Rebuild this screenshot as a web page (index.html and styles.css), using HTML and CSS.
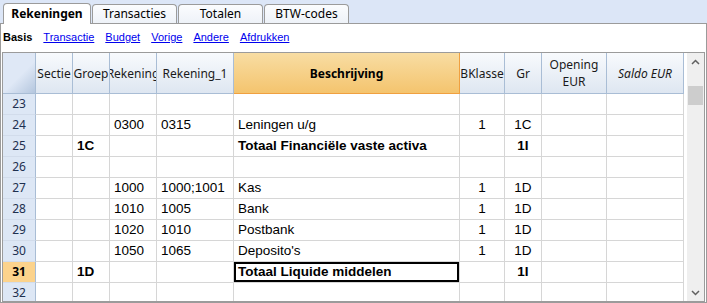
FILE: index.html
```html
<!DOCTYPE html>
<html lang="nl">
<head>
    <meta charset="UTF-8">
    <title>Rekeningen</title>
    <link rel="stylesheet" href="styles.css">
</head>
<body>
    <div class="tabs">
        <div class="tab active">Rekeningen</div>
        <div class="tab">Transacties</div>
        <div class="tab">Totalen</div>
        <div class="tab">BTW-codes</div>
    </div>
    <div class="pane">
        <div class="views">
            <span class="view current">Basis</span>
            <a class="view" href="#">Transactie</a>
            <a class="view" href="#">Budget</a>
            <a class="view" href="#">Vorige</a>
            <a class="view" href="#">Andere</a>
            <a class="view" href="#">Afdrukken</a>
        </div>
        <div class="grid">
            <table class="sheet">
                <thead>
                    <tr>
                        <th class="corner w-rh"></th>
                        <th class="w-sec"><div class="hd">Sectie</div></th>
                        <th class="w-grp"><div class="hd">Groep</div></th>
                        <th class="w-rek"><div class="hd">Rekening</div></th>
                        <th class="w-rek1"><div class="hd">Rekening_1</div></th>
                        <th class="w-desc sel"><div class="hd bold">Beschrijving</div></th>
                        <th class="w-bk"><div class="hd">BKlasse</div></th>
                        <th class="w-gr"><div class="hd">Gr</div></th>
                        <th class="w-open"><div class="hd two">Opening<br>EUR</div></th>
                        <th class="w-saldo"><div class="hd italic">Saldo EUR</div></th>
                    </tr>
                </thead>
                <tbody>
                    <tr><td class="rh">23</td><td></td><td></td><td></td><td></td><td></td><td></td><td></td><td></td><td></td></tr>
                    <tr><td class="rh">24</td><td></td><td></td><td>0300</td><td>0315</td><td>Leningen u/g</td><td class="c">1</td><td class="c">1C</td><td></td><td></td></tr>
                    <tr><td class="rh">25</td><td></td><td class="b">1C</td><td></td><td></td><td class="b">Totaal Financiële vaste activa</td><td></td><td class="c b">1I</td><td></td><td></td></tr>
                    <tr><td class="rh">26</td><td></td><td></td><td></td><td></td><td></td><td></td><td></td><td></td><td></td></tr>
                    <tr><td class="rh">27</td><td></td><td></td><td>1000</td><td>1000;1001</td><td>Kas</td><td class="c">1</td><td class="c">1D</td><td></td><td></td></tr>
                    <tr><td class="rh">28</td><td></td><td></td><td>1010</td><td>1005</td><td>Bank</td><td class="c">1</td><td class="c">1D</td><td></td><td></td></tr>
                    <tr><td class="rh">29</td><td></td><td></td><td>1020</td><td>1010</td><td>Postbank</td><td class="c">1</td><td class="c">1D</td><td></td><td></td></tr>
                    <tr><td class="rh">30</td><td></td><td></td><td>1050</td><td>1065</td><td>Deposito's</td><td class="c">1</td><td class="c">1D</td><td></td><td></td></tr>
                    <tr class="cur"><td class="rh">31</td><td></td><td class="b">1D</td><td></td><td></td><td class="b focus">Totaal Liquide middelen</td><td></td><td class="c b">1I</td><td></td><td></td></tr>
                    <tr><td class="rh">32</td><td></td><td></td><td></td><td></td><td></td><td></td><td></td><td></td><td></td></tr>
                </tbody>
            </table>
            <div class="scrollbar">
                <svg class="arrow" width="9" height="6" viewBox="0 0 9 6"><path d="M1 5 L4.5 1.5 L8 5" fill="none" stroke="#606060" stroke-width="1.5"/></svg>
                <div class="track"><div class="thumb"></div></div>
                <svg class="arrow" width="9" height="6" viewBox="0 0 9 6"><path d="M1 1 L4.5 4.5 L8 1" fill="none" stroke="#606060" stroke-width="1.5"/></svg>
            </div>
        </div>
    </div>
</body>
</html>
```

FILE: styles.css
```css
* {
    box-sizing: border-box;
    margin: 0;
    padding: 0;
}
body {
    width: 707px;
    height: 303px;
    overflow: hidden;
    background: white;
    font-family: "Liberation Sans", Arial, sans-serif;
}
.tabs {
    height: 23px;
    background: #dce6f7;
    display: flex;
    align-items: flex-end;
    gap: 1px;
    padding-left: 3px;
}
.tab {
    width: 85px;
    height: 19px;
    border: 1px solid #9b9b9b;
    border-bottom: none;
    border-radius: 4px 4px 0 0;
    background: linear-gradient(#fbfcfe, #eef2f8);
    font-family: "Noto Sans", sans-serif;
    font-size: 12px;
    line-height: 18px;
    text-align: center;
    color: #000;
}
.tab.active {
    width: 88px;
    height: 21px;
    margin-bottom: -1px;
    background: white;
    font-weight: bold;
    position: relative;
    line-height: 20px;
}
.pane {
    height: 280px;
    border: 1px solid #9b9b9b;
    padding: 0 1px 1px 1px;
}
.views {
    height: 28px;
    display: flex;
    gap: 11px;
    padding: 7px 0 0 1px;
    font-family: "Liberation Sans", Arial, sans-serif;
    font-size: 11px;
}
.view {
    color: #0000ee;
    text-decoration: underline;
}
.view.current {
    color: #000;
    font-weight: bold;
    text-decoration: none;
}
.grid {
    display: flex;
    height: 250px;
    border: 1px solid #9b9b9b;
    overflow: hidden;
}
.sheet {
    border-collapse: separate;
    border-spacing: 0;
    table-layout: fixed;
    width: 681px;
    flex: none;
    font-size: 13.5px;
}
.sheet th, .sheet td {
    border-right: 1px solid #d6d6d6;
    border-bottom: 1px solid #d6d6d6;
    overflow: hidden;
    white-space: nowrap;
}
.sheet th {
    height: 41px;
    background: linear-gradient(#f8fafd, #dee6f1);
    border-right-color: #a9bdd5;
    border-bottom-color: #a9bdd5;
    font-family: "Noto Sans", sans-serif;
    font-size: 12px;
    font-weight: normal;
    color: #1a1a1a;
    line-height: 15px;
}
.hd {
    display: flex;
    justify-content: center;
    text-align: center;
}
.hd.two {
    line-height: 17px;
}
.hd.bold {
    font-weight: bold;
    color: #000;
}
.hd.italic {
    font-style: italic;
}
.sheet th.sel {
    background: linear-gradient(#f8dda3, #f4c46e);
    border-right-color: #f0a040;
    border-bottom-color: #f0a040;
}
.sheet th.corner {
    background: linear-gradient(135deg, #dfe8f6 55%, #b4c6de);
}
.w-rh { width: 33px; }
.w-sec { width: 37px; }
.w-grp { width: 37px; }
.w-rek { width: 47px; }
.w-rek1 { width: 77px; }
.w-desc { width: 226px; }
.w-bk { width: 45px; }
.w-gr { width: 37px; }
.w-open { width: 65px; }
.w-saldo { width: 77px; }
.sheet td {
    height: 21px;
    line-height: 20px;
    padding: 0 3px 0 4px;
    color: #000;
}
.sheet td.rh {
    background: #dde7f5;
    border-right-color: #a9bdd5;
    border-bottom-color: #d2dceb;
    font-family: "Noto Sans", sans-serif;
    font-size: 12px;
    color: #1e3050;
    text-align: center;
    padding: 0;
}
.cur td.rh {
    background: #fcd38c;
    font-weight: bold;
    color: #000;
}
.sheet td.c {
    text-align: center;
    padding: 0;
}
.sheet td.b {
    font-weight: bold;
}
.sheet td.focus {
    box-shadow: inset 0 0 0 2px #000;
}
.scrollbar {
    flex: 1;
    display: flex;
    flex-direction: column;
    align-items: center;
    background: #efefef;
    border-left: 3px solid white;
    padding: 6px 0 5px;
}
.track {
    flex: 1;
    width: 100%;
    padding: 21px 1px 0;
}
.thumb {
    height: 19px;
    background: #cdcdcd;
}
```
